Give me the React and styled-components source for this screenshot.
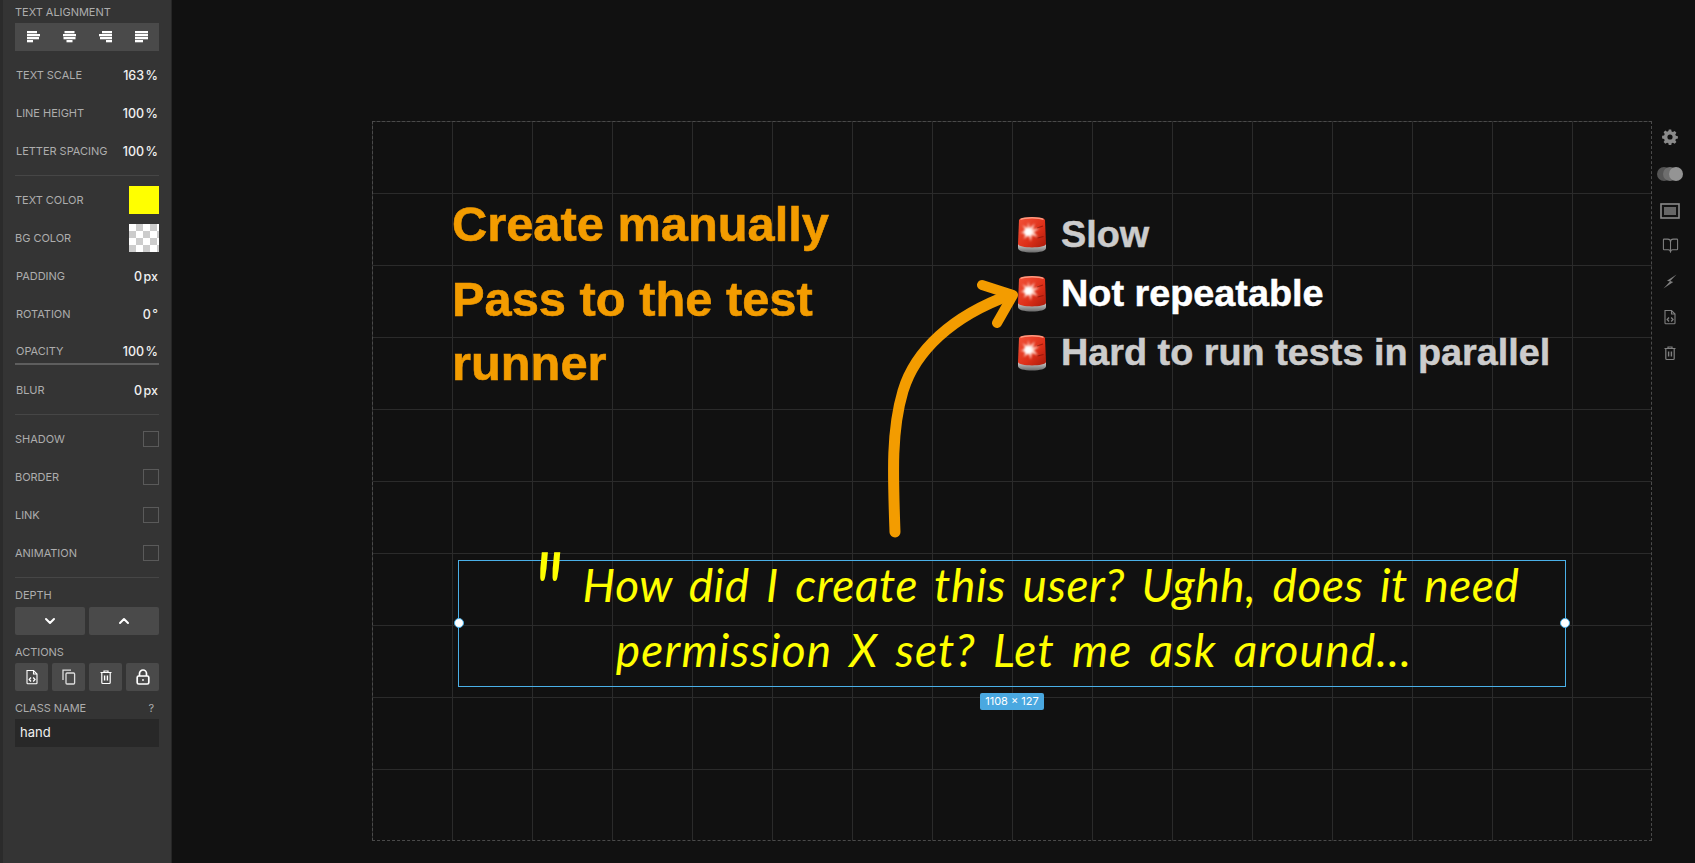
import React from 'react'
import styled, { createGlobalStyle } from 'styled-components'
import { ChevronDown, ChevronUp, BookOpen } from 'lucide-react'

const GlobalStyle = createGlobalStyle`
	html, body {
		margin: 0;
		padding: 0;
		height: 100%;
		background: #111;
		overflow: hidden;
	}
`

const Page = styled.div`
	display: flex;
	width: 1695px;
	height: 863px;
	background: #111;
	font-family: Inter, 'Liberation Sans', sans-serif;
`

const Sidebar = styled.aside`
	width: 172px;
	flex: none;
	box-sizing: border-box;
	padding: 0 12px;
	background: #343434;
	border-left: 3px solid #2b2b2b;
	border-right: 1px solid #262626;
`

const Label = styled.div`
	font-size: 11px;
	line-height: 14px;
	color: #adadad;
	text-transform: uppercase;
	letter-spacing: -0.03px;
`

const TopLabel = styled(Label)`
	padding-top: 5px;
	height: 18px;
`

const AlignBar = styled.div`
	display: grid;
	grid-template-columns: repeat(4, 1fr);
	justify-items: center;
	align-items: center;
	height: 28px;
	background: #4a4a4a;
`

const AlignIcon = ({ widths, side }) => (
	<svg width='13' height='12' viewBox='0 0 13 12'>
		{widths.map((w, i) => {
			const x = side === 'left' ? 0 : side === 'right' ? 13 - w : (13 - w) / 2
			return <rect key={i} x={x} y={i * 3} width={w} height='2.3' fill='#fff' />
		})}
	</svg>
)

const Row = styled.div`
	display: flex;
	align-items: center;
	justify-content: space-between;
	height: 38px;
	box-sizing: border-box;
	border-bottom: ${p => (p.$track ? '2px solid #5e5e5e' : 'none')};
	${p => p.$track && 'height: 26px; margin: 6px 0 6px;'}
`

const ValueRow = styled(Row)`
	padding: 0 1px;
`

const Value = styled.span`
	font-size: 12.5px;
	font-weight: 500;
	color: #f0f0f0;
`

const Unit = styled.span`
	margin-left: 1.5px;
`

const Spacer = styled.div`
	height: 5px;
`

const Divider = styled.div`
	height: 1px;
	background: #464646;
	margin: 5px 0;
`

const Swatch = styled.div`
	width: 30px;
	height: 28px;
	background: ${p => p.$color || '#fff'};
	${p =>
		p.$checker &&
		`background-color: #fff;
		background-image: linear-gradient(45deg, #ccc 25%, transparent 25%, transparent 75%, #ccc 75%), linear-gradient(45deg, #ccc 25%, transparent 25%, transparent 75%, #ccc 75%);
		background-size: 14px 14px;
		background-position: 0 0, 7px 7px;`}
`

const CheckBox = styled.div`
	width: 16px;
	height: 16px;
	box-sizing: border-box;
	border: 1px solid #5a5a5a;
`

const ButtonRow = styled.div`
	display: flex;
	gap: 4px;
	margin-top: ${p => p.$top || 0}px;
`

const ToolButton = styled.div`
	flex: 1;
	height: 28px;
	display: flex;
	align-items: center;
	justify-content: center;
	background: #4a4a4a;
	border-radius: 2px;
	color: #fff;
`

const SectionLabel = styled(Label)`
	display: flex;
	justify-content: space-between;
	margin-top: ${p => p.$top || 0}px;
	padding-right: 5px;
`

const ClassInput = styled.div`
	height: 28px;
	box-sizing: border-box;
	margin-top: 4px;
	padding-left: 5px;
	background: #282828;
	color: #f0f0f0;
	font-size: 13px;
	line-height: 27px;
`

const Stage = styled.main`
	flex: none;
	width: 200px;
`

const Canvas = styled.section`
	position: relative;
	flex: none;
	width: 1280px;
	height: 720px;
	margin-top: 121px;
	box-sizing: border-box;
	outline: 1px dashed #4a4a4a;
	outline-offset: -1px;
	background-image: linear-gradient(to right, #2b2b2b 1px, transparent 1px),
		linear-gradient(to bottom, #2b2b2b 1px, transparent 1px);
	background-size: 80px 72px;
`

const Title = styled.div`
	position: absolute;
	left: 80px;
	top: ${p => p.$top}px;
	width: 420px;
	font-family: 'Liberation Sans', Arial, sans-serif;
	font-weight: 700;
	font-size: 48.8px;
	line-height: 64px;
	color: #f39c00;
	-webkit-text-stroke: 0.6px #f39c00;
`

const List = styled.ul`
	position: absolute;
	left: 645px;
	top: 84px;
	margin: 0;
	padding: 0;
	list-style: none;
`

const ListItem = styled.li`
	display: flex;
	align-items: center;
	gap: 14px;
	height: 59px;
	font-family: 'Liberation Sans', Arial, sans-serif;
	font-weight: 700;
	font-size: 37.8px;
	color: ${p => (p.$active ? '#fff' : '#cccccc')};
	-webkit-text-stroke: 0.5px currentColor;
`

const Selection = styled.div`
	position: absolute;
	left: 86px;
	top: 439px;
	width: 1108px;
	height: 127px;
	box-sizing: border-box;
	border: 1px solid #4ab0e8;
`

const HandText = styled.div`
	margin-top: -9px;
	font-family: Lato, 'Open Sans', sans-serif;
	font-style: italic;
	font-weight: 400;
	font-size: 46px;
	line-height: 65px;
	word-spacing: 5px;
	color: #ffff00;
	text-align: center;
`

const HandLine = styled.div`
	padding-left: ${p => p.$shift || 0}px;
	letter-spacing: ${p => p.$spacing || 0.6}px;
	white-space: nowrap;
`

const QuoteMark = styled.span`
	position: absolute;
	left: 74px;
	top: -27px;
	font-family: Lato, 'Open Sans', sans-serif;
	font-style: italic;
	font-size: 112px;
	line-height: 112px;
	font-weight: 400;
	color: #ffff00;
	transform: scaleX(0.72);
	transform-origin: left top;
`

const Handle = styled.span`
	position: absolute;
	top: 57px;
	${p => p.$side}: -5px;
	width: 10px;
	height: 10px;
	box-sizing: border-box;
	background: #fff;
	border: 1px solid #4ab0e8;
	border-radius: 50%;
`

const SizeBadge = styled.div`
	position: absolute;
	left: 521px;
	top: 132px;
	width: 64px;
	height: 17px;
	background: #4aa8e0;
	border-radius: 2px;
	color: #fff;
	font-size: 11px;
	line-height: 17px;
	text-align: center;
`

const ArrowSvg = styled.svg`
	position: absolute;
	left: 500px;
	top: 140px;
	overflow: visible;
`

const RightBar = styled.nav`
	flex: 1;
	display: flex;
	flex-direction: column;
	align-items: center;
	padding-top: 127px;
	padding-right: 7px;
	color: #808080;
`

const RightSlot = styled.div`
	height: ${p => p.$h || 36}px;
	display: flex;
	align-items: center;
	justify-content: center;
`

const FileCode = ({ size = 16 }) => (
	<svg width={size} height={size} viewBox='0 0 16 16' fill='none' stroke='currentColor' strokeWidth='1.1'>
		<path d='M3 1.5h6.5L13 5v9a.8.8 0 0 1-.8.8H3.8A.8.8 0 0 1 3 14z' />
		<path d='M9.5 1.5V5H13' />
		<path d='M7 8.5 5.2 10.5 7 12.5M9.2 8.5l1.8 2-1.8 2' strokeWidth='1.3' />
	</svg>
)

const Trash = ({ size = 16 }) => (
	<svg width={size} height={size} viewBox='0 0 16 16' fill='none' stroke='currentColor' strokeWidth='1.2'>
		<path d='M2.5 3.5h11M6 3.5V2h4v1.5' />
		<path d='M3.8 3.5v10a1 1 0 0 0 1 1h6.4a1 1 0 0 0 1-1v-10z' />
		<path d='M6.6 6.5v5M9.4 6.5v5' strokeWidth='1.4' />
	</svg>
)

const CopyIcon = () => (
	<svg width='14' height='16' viewBox='0 0 14 16' fill='none' stroke='#ddd' strokeWidth='1.3'>
		<path d='M1 11V1.2h8' />
		<rect x='4' y='4' width='8.6' height='11' rx='1' />
	</svg>
)

const LockIcon = () => (
	<svg width='14' height='16' viewBox='0 0 14 16' fill='none' stroke='#fff' strokeWidth='1.7'>
		<path d='M3.5 7V4.5a3.5 3.5 0 0 1 7 0V7' />
		<rect x='1.2' y='7' width='11.6' height='8' rx='1.5' />
		<circle cx='7' cy='11' r='0.9' fill='#fff' stroke='none' />
	</svg>
)

const Gear = () => (
	<svg width='16' height='16' viewBox='0 0 16 16'>
		<path
			fill='#8a8a8a'
			fillRule='evenodd'
			d='M6.8.5h2.4l.4 2 1.3.6 1.8-1.1 1.7 1.7-1.1 1.8.6 1.3 2 .4v2.4l-2 .4-.6 1.3 1.1 1.8-1.7 1.7-1.8-1.1-1.3.6-.4 2H6.8l-.4-2-1.3-.6-1.8 1.1-1.7-1.7 1.1-1.8-.6-1.3-2-.4V6.8l2-.4.6-1.3-1.1-1.8 1.7-1.7 1.8 1.1 1.3-.6zM8 5.4a2.6 2.6 0 1 0 0 5.2 2.6 2.6 0 0 0 0-5.2z'
		/>
	</svg>
)

const ToggleIcon = () => (
	<svg width='26' height='14' viewBox='0 0 26 14'>
		<circle cx='7' cy='7' r='7' fill='#555' />
		<circle cx='13' cy='7' r='7' fill='#6e6e6e' />
		<circle cx='19' cy='7' r='7' fill='#949494' />
	</svg>
)

const FrameIcon = () => (
	<svg width='20' height='16' viewBox='0 0 20 16'>
		<rect x='1' y='1' width='18' height='14' fill='none' stroke='#8a8a8a' strokeWidth='1.6' />
		<rect x='4' y='4' width='12' height='8' fill='#666' />
	</svg>
)

const Bolt = () => (
	<svg width='14' height='15' viewBox='0 0 14 15'>
		<path fill='#808080' d='M13.5.5 4 6.800l3 .8L.5 14.500 10.200 8l-3-.9z' />
	</svg>
)

const Siren = () => (
	<svg width='30' height='37' viewBox='0 0 30 37'>
		<defs>
			<linearGradient id='dome' x1='0' x2='1' y1='0' y2='1'>
				<stop offset='0' stopColor='#f4533a' />
				<stop offset='0.6' stopColor='#dd2f18' />
				<stop offset='1' stopColor='#a81a0c' />
			</linearGradient>
			<linearGradient id='base' x1='0' x2='0' y1='0' y2='1'>
				<stop offset='0' stopColor='#d0d0d0' />
				<stop offset='1' stopColor='#6a6a6a' />
			</linearGradient>
			<filter id='glow' x='-30%' y='-30%' width='160%' height='160%'>
				<feGaussianBlur stdDeviation='0.8' />
			</filter>
		</defs>
		<path d='M1 28h28v4c0 3-6 4.500-14 4.500S1 35 1 32z' fill='url(#base)' />
		<path d='M2 4C2.500.3 27.500.3 28 4L29 28c0 4.500-28 4.500-28 0z' fill='url(#dome)' />
		<path d='M3.500 3.500c4-2.300 19-2.300 23 0' stroke='#ff9a80' strokeWidth='1.400' fill='none' />
		<path d='M20 12l6-2M20.500 22l6-1.500' stroke='#8e1408' strokeWidth='1.100' opacity='0.8' />
		<g filter='url(#glow)'>
			<path
				d='M11 6l1.800 6 5-4.500-2.200 6 7-1-5.800 3.500 4 5-6-2-1 6.500-2-6-5.300 3.500 2.800-5.500-6-.5 5.700-2.800-3.700-5 5.400 2.800z'
				fill='#ffd8cc'
			/>
			<circle cx='11' cy='16' r='4' fill='#fff' />
		</g>
	</svg>
)

const Arrow = () => (
	<ArrowSvg width='140' height='260' viewBox='0 0 140 260' fill='none' stroke='#f39c00' strokeLinecap='round' strokeLinejoin='round'>
		<path d='M23 271C21 215 19 170 31 130C43 90 80 55 138 34' strokeWidth='11' />
		<path d='M110 24 141 34 125 62' strokeWidth='10' />
	</ArrowSvg>
)

const scaleRows = [
	['Text scale', '163', '%'],
	['Line height', '100', '%'],
	['Letter spacing', '100', '%']
]

const checkRows = ['Shadow', 'Border', 'Link', 'Animation']

const listItems = [
	{ text: 'Slow' },
	{ text: 'Not repeatable', active: true },
	{ text: 'Hard to run tests in parallel' }
]

export default () => (
	<Page>
		<GlobalStyle />
		<Sidebar>
			<TopLabel>Text alignment</TopLabel>
			<AlignBar>
				<AlignIcon side='left' widths={[10, 13, 12, 6]} />
				<AlignIcon side='center' widths={[10, 13, 12, 6]} />
				<AlignIcon side='right' widths={[10, 13, 12, 6]} />
				<AlignIcon side='left' widths={[13, 13, 13, 8]} />
			</AlignBar>
			<Spacer />
			{scaleRows.map(([name, num, unit]) => (
				<ValueRow key={name}>
					<Label>{name}</Label>
					<Value>
						{num}
						<Unit>{unit}</Unit>
					</Value>
				</ValueRow>
			))}
			<Divider />
			<Row>
				<Label>Text color</Label>
				<Swatch $color='#ffff00' />
			</Row>
			<Row>
				<Label>BG color</Label>
				<Swatch $checker />
			</Row>
			<ValueRow>
				<Label>Padding</Label>
				<Value>
					0<Unit>px</Unit>
				</Value>
			</ValueRow>
			<ValueRow>
				<Label>Rotation</Label>
				<Value>
					0<Unit>°</Unit>
				</Value>
			</ValueRow>
			<ValueRow $track>
				<Label>Opacity</Label>
				<Value>
					100<Unit>%</Unit>
				</Value>
			</ValueRow>
			<ValueRow>
				<Label>Blur</Label>
				<Value>
					0<Unit>px</Unit>
				</Value>
			</ValueRow>
			<Divider />
			{checkRows.map(name => (
				<Row key={name}>
					<Label>{name}</Label>
					<CheckBox />
				</Row>
			))}
			<Divider />
			<SectionLabel $top={10}>Depth</SectionLabel>
			<ButtonRow $top={5}>
				<ToolButton>
					<ChevronDown size={16} strokeWidth={3} />
				</ToolButton>
				<ToolButton>
					<ChevronUp size={16} strokeWidth={3} />
				</ToolButton>
			</ButtonRow>
			<SectionLabel $top={10}>Actions</SectionLabel>
			<ButtonRow $top={4}>
				<ToolButton>
					<FileCode />
				</ToolButton>
				<ToolButton>
					<CopyIcon />
				</ToolButton>
				<ToolButton>
					<Trash />
				</ToolButton>
				<ToolButton>
					<LockIcon />
				</ToolButton>
			</ButtonRow>
			<SectionLabel $top={10}>
				<span>Class name</span>
				<span>?</span>
			</SectionLabel>
			<ClassInput>hand</ClassInput>
		</Sidebar>
		<Stage />
		<Canvas>
			<Title $top={71}>Create manually</Title>
			<Title $top={146}>Pass to the test runner</Title>
			<List>
				{listItems.map(item => (
					<ListItem key={item.text} $active={item.active}>
						<Siren />
						{item.text}
					</ListItem>
				))}
			</List>
			<Arrow />
			<Selection>
				<HandText>
					<HandLine $shift={78}>How did I create this user? Ughh, does it need</HandLine>
					<HandLine $shift={4} $spacing={1.2}>permission X set? Let me ask around...</HandLine>
				</HandText>
				<QuoteMark>"</QuoteMark>
				<Handle $side='left' />
				<Handle $side='right' />
				<SizeBadge>1108 × 127</SizeBadge>
			</Selection>
		</Canvas>
		<RightBar>
			<RightSlot $h={20}>
				<Gear />
			</RightSlot>
			<RightSlot $h={54}>
				<ToggleIcon />
			</RightSlot>
			<RightSlot $h={20}>
				<FrameIcon />
			</RightSlot>
			<RightSlot $h={48}>
				<BookOpen size={17} strokeWidth={1.5} />
			</RightSlot>
			<RightSlot $h={24}>
				<Bolt />
			</RightSlot>
			<RightSlot $h={48}>
				<FileCode />
			</RightSlot>
			<RightSlot $h={24}>
				<Trash />
			</RightSlot>
		</RightBar>
	</Page>
)
